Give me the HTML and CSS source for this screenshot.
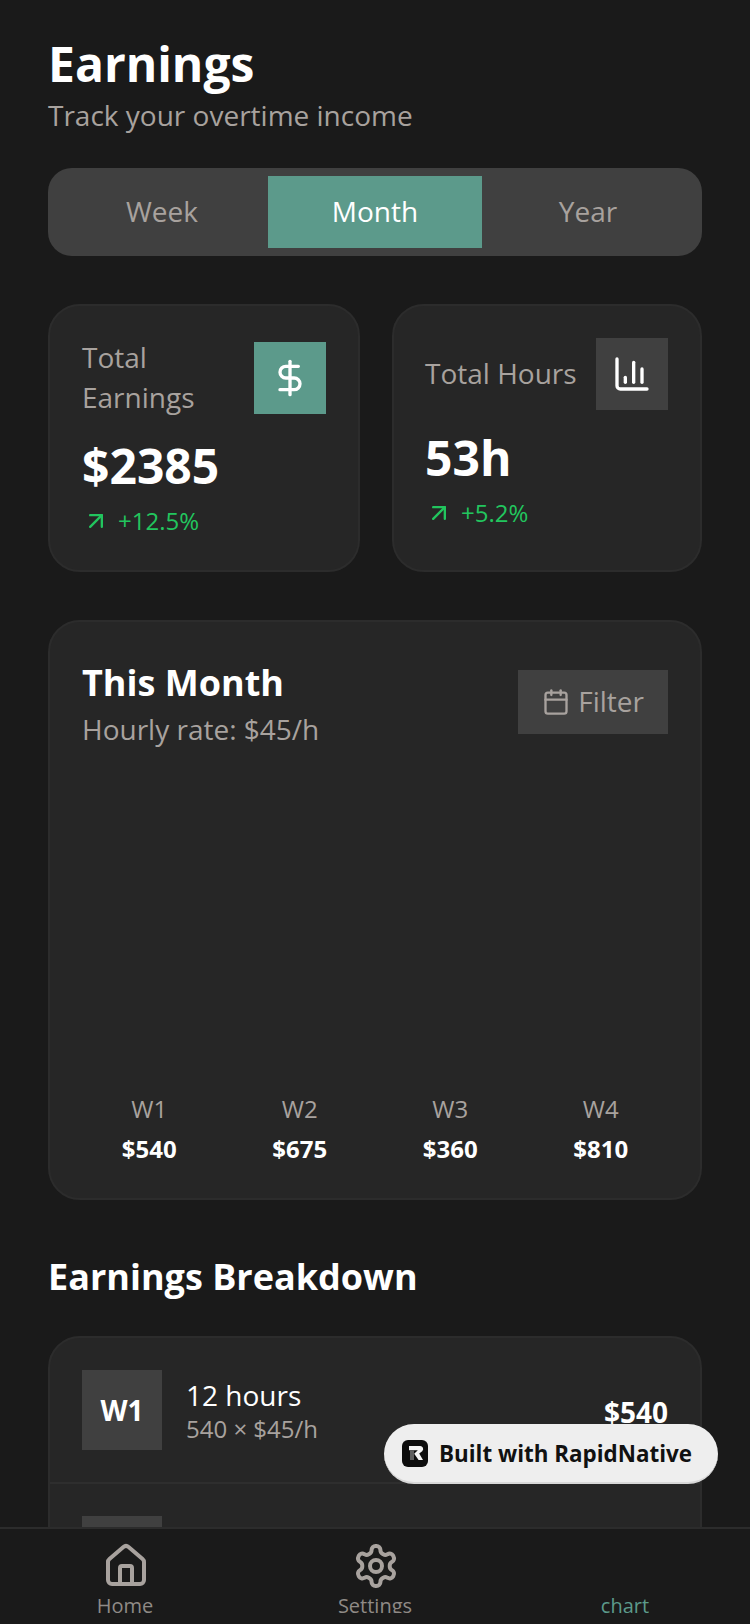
FILE: index.html
```html
<!DOCTYPE html>
<html lang="en">
<head>
    <meta charset="UTF-8">
    <meta name="viewport" content="width=device-width, initial-scale=1.0">
    <title>Earnings</title>
    <link rel="stylesheet" href="styles.css">
</head>
<body>
    <div class="screen">
        <main class="content">
            <!-- Header -->
            <header class="page-head">
                <h1>Earnings</h1>
                <p>Track your overtime income</p>
            </header>

            <div class="segments">
                <div class="segment">Week</div>
                <div class="segment active">Month</div>
                <div class="segment">Year</div>
            </div>

            <!-- Stat cards -->
            <section class="stats">
                <div class="card stat">
                    <div class="stat-top">
                        <span class="stat-label">Total Earnings</span>
                        <span class="stat-icon green">
                            <svg width="40" height="40" viewBox="0 0 24 24" fill="none" stroke="#fff" stroke-width="2" stroke-linecap="round" stroke-linejoin="round"><line x1="12" y1="2" x2="12" y2="22"/><path d="M17 5H9.5a3.5 3.5 0 0 0 0 7h5a3.5 3.5 0 0 1 0 7H6"/></svg>
                        </span>
                    </div>
                    <div class="stat-value">$2385</div>
                    <div class="stat-change">
                        <svg width="28" height="28" viewBox="0 0 24 24" fill="none" stroke="#22c55e" stroke-width="2" stroke-linecap="round" stroke-linejoin="round"><path d="M7 7h10v10"/><path d="M7 17 17 7"/></svg>
                        <span>+12.5%</span>
                    </div>
                </div>
                <div class="card stat">
                    <div class="stat-top">
                        <span class="stat-label">Total Hours</span>
                        <span class="stat-icon">
                            <svg width="40" height="40" viewBox="0 0 24 24" fill="none" stroke="#fff" stroke-width="2" stroke-linecap="round" stroke-linejoin="round"><path d="M3 3v16a2 2 0 0 0 2 2h16"/><path d="M8 17v-3"/><path d="M13 17V5"/><path d="M18 17V9"/></svg>
                        </span>
                    </div>
                    <div class="stat-value">53h</div>
                    <div class="stat-change">
                        <svg width="28" height="28" viewBox="0 0 24 24" fill="none" stroke="#22c55e" stroke-width="2" stroke-linecap="round" stroke-linejoin="round"><path d="M7 7h10v10"/><path d="M7 17 17 7"/></svg>
                        <span>+5.2%</span>
                    </div>
                </div>
            </section>

            <!-- Chart -->
            <section class="card chart">
                <div class="chart-head">
                    <div class="chart-title">
                        <h2>This Month</h2>
                        <p>Hourly rate: $45/h</p>
                    </div>
                    <div class="filter">
                        <svg width="28" height="28" viewBox="0 0 24 24" fill="none" stroke="#a8a29e" stroke-width="2" stroke-linecap="round" stroke-linejoin="round"><path d="M8 2v4"/><path d="M16 2v4"/><rect x="3" y="4" width="18" height="18" rx="2"/><path d="M3 10h18"/></svg>
                        <span>Filter</span>
                    </div>
                </div>
                <div class="weeks">
                    <div class="week"><span class="week-name">W1</span><span class="week-amount">$540</span></div>
                    <div class="week"><span class="week-name">W2</span><span class="week-amount">$675</span></div>
                    <div class="week"><span class="week-name">W3</span><span class="week-amount">$360</span></div>
                    <div class="week"><span class="week-name">W4</span><span class="week-amount">$810</span></div>
                </div>
            </section>

            <!-- Breakdown -->
            <h2 class="section-title">Earnings Breakdown</h2>
            <section class="card breakdown">
                <div class="row">
                    <div class="row-badge">W1</div>
                    <div class="row-info">
                        <div class="row-hours">12 hours</div>
                        <div class="row-calc">540 × $45/h</div>
                    </div>
                    <div class="row-amount">$540</div>
                </div>
                <div class="row">
                    <div class="row-badge">W2</div>
                </div>
            </section>
        </main>

        <!-- Tab bar -->
        <nav class="tabs">
            <div class="tab">
                <svg width="48" height="48" viewBox="0 0 24 24" fill="none" stroke="#a8a29e" stroke-width="2" stroke-linecap="round" stroke-linejoin="round"><path d="M15 21v-8a1 1 0 0 0-1-1h-4a1 1 0 0 0-1 1v8"/><path d="M3 10a2 2 0 0 1 .709-1.528l7-5.999a2 2 0 0 1 2.582 0l7 5.999A2 2 0 0 1 21 10v9a2 2 0 0 1-2 2H5a2 2 0 0 1-2-2z"/></svg>
                <span class="tab-label">Home</span>
            </div>
            <div class="tab">
                <svg width="48" height="48" viewBox="0 0 24 24" fill="none" stroke="#a8a29e" stroke-width="2" stroke-linecap="round" stroke-linejoin="round"><path d="M12.22 2h-.44a2 2 0 0 0-2 2v.18a2 2 0 0 1-1 1.73l-.43.25a2 2 0 0 1-2 0l-.15-.08a2 2 0 0 0-2.73.73l-.22.38a2 2 0 0 0 .73 2.73l.15.1a2 2 0 0 1 1 1.72v.51a2 2 0 0 1-1 1.74l-.15.09a2 2 0 0 0-.73 2.73l.22.38a2 2 0 0 0 2.73.73l.15-.08a2 2 0 0 1 2 0l.43.25a2 2 0 0 1 1 1.73V20a2 2 0 0 0 2 2h.44a2 2 0 0 0 2-2v-.18a2 2 0 0 1 1-1.73l.43-.25a2 2 0 0 1 2 0l.15.08a2 2 0 0 0 2.73-.73l.22-.39a2 2 0 0 0-.73-2.73l-.15-.08a2 2 0 0 1-1-1.74v-.5a2 2 0 0 1 1-1.74l.15-.09a2 2 0 0 0 .73-2.73l-.22-.38a2 2 0 0 0-2.73-.73l-.15.08a2 2 0 0 1-2 0l-.43-.25a2 2 0 0 1-1-1.73V4a2 2 0 0 0-2-2z"/><circle cx="12" cy="12" r="3"/></svg>
                <span class="tab-label">Settings</span>
            </div>
            <div class="tab">
                <span class="tab-icon-empty"></span>
                <span class="tab-label current">chart</span>
            </div>
        </nav>

        <!-- Floating badge -->
        <div class="built-with">
            <svg width="26" height="27" viewBox="0 0 26 27"><rect width="26" height="27" rx="6" fill="#0d0d0d"/><path d="M7 6h11a3 3 0 0 1 2.2 5.2l-3 2.4L21 20h-4.4l-4.4-6.2 3.6-3.6H7z" fill="#f4f4f4"/><path d="M8 10.2h4v9.8H8z" fill="#5e5e5e"/></svg>
            <span>Built with RapidNative</span>
        </div>
    </div>
</body>
</html>
```

FILE: styles.css
```css
/* General Styles */
* {
    box-sizing: border-box;
}

body {
    margin: 0;
    padding: 0;
    background-color: #1a1a1a;
    color: #fff;
    font-family: 'Open Sans', sans-serif;
}

h1, h2, p {
    margin: 0;
}

.screen {
    position: relative;
    display: flex;
    flex-direction: column;
    width: 750px;
    height: 1624px;
    overflow: hidden;
}

.content {
    flex: 1;
    min-height: 0;
    overflow: hidden;
    padding: 32px 48px 0;
}

/* Header */
.page-head h1 {
    font-size: 48px;
    line-height: 63px;
    font-weight: 700;
}

.page-head p {
    font-size: 28px;
    line-height: 40px;
    color: #a8a29e;
}

/* Period switch */
.segments {
    display: flex;
    margin-top: 33px;
    padding: 8px;
    border-radius: 24px;
    background-color: #404040;
}

.segment {
    flex: 1;
    height: 72px;
    padding-bottom: 2px;
    display: flex;
    align-items: center;
    justify-content: center;
    font-size: 28px;
    color: #a8a29e;
}

.segment.active {
    flex: none;
    width: 214px;
    background-color: #5c9a8b;
    color: #fff;
}

/* Cards */
.card {
    background-color: #262626;
    border: 2px solid #2c2c2c;
    border-radius: 32px;
}

.stats {
    display: flex;
    gap: 32px;
    margin-top: 48px;
}

.stat {
    flex: 1;
    min-width: 0;
    height: 268px;
    padding: 32px 32px 32px 31px;
}

.stat:first-child {
    flex: none;
    width: 312px;
    padding-left: 32px;
}

.stat-top {
    display: flex;
    align-items: center;
    justify-content: space-between;
    gap: 16px;
}

.stat-label {
    margin-top: -1px;
    padding-bottom: 1px;
    font-size: 28px;
    line-height: 40px;
    color: #a8a29e;
}

.stat-icon {
    flex: none;
    width: 72px;
    height: 72px;
    display: flex;
    align-items: center;
    justify-content: center;
    background-color: #404040;
}

.stat-icon.green {
    background-color: #5c9a8b;
}

.stat-value {
    margin-top: 16px;
    font-size: 48px;
    line-height: 64px;
    font-weight: 700;
}

.stat-change {
    display: flex;
    align-items: center;
    gap: 8px;
    margin-top: 7px;
    font-size: 24px;
    line-height: 32px;
    color: #22c55e;
}

/* Chart */
.chart {
    height: 580px;
    margin-top: 48px;
    padding: 32px 32px 33px;
    display: flex;
    flex-direction: column;
    justify-content: space-between;
}

.chart-head {
    display: flex;
    justify-content: space-between;
    align-items: flex-start;
}

.chart-title {
    padding-top: 5px;
}

.chart-title h2 {
    font-size: 36px;
    line-height: 48px;
    font-weight: 700;
}

.chart-title p {
    margin-top: 2px;
    font-size: 28px;
    line-height: 40px;
    color: #a8a29e;
}

.filter {
    display: flex;
    align-items: center;
    gap: 8px;
    height: 64px;
    margin-top: 16px;
    padding: 0 24px 3px;
    background-color: #404040;
    font-size: 28px;
    color: #a8a29e;
}

.filter svg {
    margin-top: 3px;
}

.weeks {
    display: flex;
    margin: 0 -8px;
}

.week {
    flex: 1;
    display: flex;
    flex-direction: column;
    align-items: center;
    gap: 8px;
}

.week-name {
    font-size: 24px;
    line-height: 32px;
    color: #a8a29e;
}

.week-amount {
    font-size: 24px;
    line-height: 32px;
    font-weight: 700;
}

/* Breakdown */
.section-title {
    margin-top: 53px;
    font-size: 36px;
    line-height: 48px;
    font-weight: 700;
}

.breakdown {
    margin-top: 35px;
}

.row {
    display: flex;
    align-items: center;
    padding: 32px;
    border-bottom: 2px solid #2e2e2e;
}

.row-badge {
    width: 80px;
    height: 80px;
    display: flex;
    align-items: center;
    justify-content: center;
    background-color: #404040;
    font-size: 28px;
    font-weight: 700;
}

.row-info {
    flex: 1;
    margin-left: 24px;
    padding-top: 2px;
}

.row-hours {
    font-size: 28px;
    line-height: 36px;
}

.row-calc {
    font-size: 24px;
    line-height: 32px;
    color: #a8a29e;
}

.row-amount {
    padding-top: 4px;
    font-size: 28px;
    line-height: 40px;
    font-weight: 700;
}

/* Tab bar */
.tabs {
    flex: none;
    display: flex;
    height: 97px;
    border-top: 2px solid #2c2c2c;
    background-color: #1a1a1a;
}

.tab {
    flex: 1;
    display: flex;
    flex-direction: column;
    align-items: center;
    padding-top: 13px;
}

.tab svg {
    margin-left: 2px;
}

.tab-icon-empty {
    height: 48px;
}

.tab-label {
    height: 21px;
    margin-top: 2px;
    overflow: hidden;
    font-size: 20px;
    line-height: 28px;
    color: #8f8a86;
}

.tab-label.current {
    color: #5c9a8b;
}

/* Floating badge */
.built-with {
    position: absolute;
    left: 384px;
    top: 1424px;
    width: 334px;
    height: 60px;
    display: flex;
    align-items: center;
    gap: 11px;
    padding-left: 18px;
    border-radius: 30px;
    background-color: #eeeeee;
    border-bottom: 2px solid #d8d8d8;
    color: #111;
    font-size: 22.4px;
    font-weight: 700;
}
```
